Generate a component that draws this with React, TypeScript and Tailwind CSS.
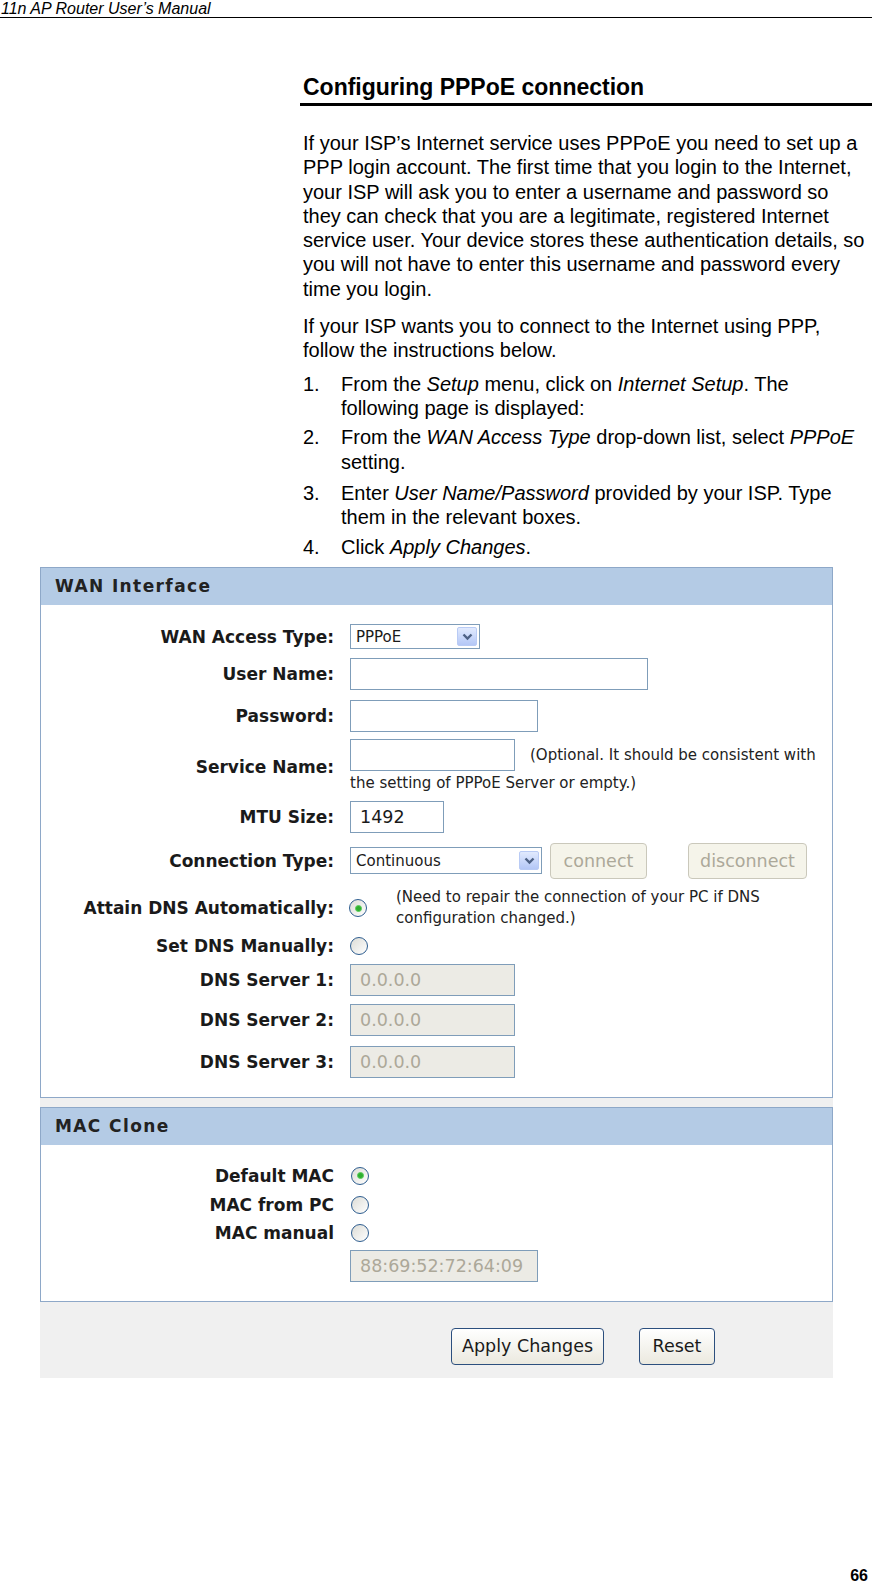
import React from 'react';

const formFont = "font-['DejaVu_Sans',Verdana,sans-serif]";

function Label({ text }: { text: string }) {
  return (
    <div className="w-[293px] shrink-0 text-right font-bold text-[17px] leading-[20px] text-[#1a1a1a]">
      {text}
    </div>
  );
}

function TextBox({ width, value, disabled }: { width: string; value?: string; disabled?: boolean }) {
  return (
    <div
      className={`${width} h-[32px] border border-[#7f9db9] flex items-center pl-[9px] text-[17.5px] ${
        disabled ? 'bg-[#ecebe5] text-[#aca899]' : 'bg-white text-[#1a1a1a]'
      }`}
    >
      {value}
    </div>
  );
}

function Select({ width, height, value }: { width: string; height: string; value: string }) {
  return (
    <div className={`${width} ${height} border border-[#7f9db9] bg-white flex items-center justify-between pl-[5px] pr-[2px] text-[15px] text-[#1a1a1a]`}>
      <span>{value}</span>
      <div className="w-[20px] h-[19px] rounded-[2px] bg-gradient-to-b from-[#e1eafe] to-[#b4c7f6] border border-[#b9cbf5] flex items-center justify-center">
        <svg width="11" height="8" viewBox="0 0 11 8">
          <path d="M1.5 1.5 L5.5 5.5 L9.5 1.5" fill="none" stroke="#4d6185" strokeWidth="2.4" />
        </svg>
      </div>
    </div>
  );
}

function Radio({ checked }: { checked?: boolean }) {
  return (
    <div className="w-[18px] h-[18px] rounded-full border border-[#2e5d8f] bg-gradient-to-br from-[#dcdcd6] to-white flex items-center justify-center">
      {checked && <div className="w-[7px] h-[7px] rounded-full bg-[#2fae2f] border border-[#5ccf5c]" />}
    </div>
  );
}

function XpButton({ width, height, label, disabled }: { width: string; height: string; label: string; disabled?: boolean }) {
  return (
    <div
      className={`${width} ${height} rounded-[4px] border flex items-center justify-center text-[17.5px] ${
        disabled
          ? 'border-[#cac8bb] bg-[#f5f4ea] text-[#aca899]'
          : 'border-[#2c4f7e] bg-gradient-to-b from-white to-[#ebe9df] text-[#1a1a1a]'
      }`}
    >
      {label}
    </div>
  );
}

export default function App() {
  return (
    <div className="w-[872px] h-[1586px] overflow-hidden bg-white text-black font-['Liberation_Sans',Arial,sans-serif]">
      {/* running header */}
      <div className="h-[18px] border-b border-black pl-[1px] text-[16px] italic leading-[17px]">
        11n AP Router User&rsquo;s Manual
      </div>

      {/* section title */}
      <div className="ml-[300px] mt-[55px] border-b-[3px] border-black pl-[3px] pb-[2px]">
        <div className="text-[23px] font-bold leading-[28px]">Configuring PPPoE connection</div>
      </div>

      <div className="ml-[303px] text-[20px] leading-[24.3px] whitespace-nowrap">
        <div className="mt-[25px]">
          <div>If your ISP&rsquo;s Internet service uses PPPoE you need to set up a</div>
          <div>PPP login account. The first time that you login to the Internet,</div>
          <div>your ISP will ask you to enter a username and password so</div>
          <div>they can check that you are a legitimate, registered Internet</div>
          <div>service user. Your device stores these authentication details, so</div>
          <div>you will not have to enter this username and password every</div>
          <div>time you login.</div>
        </div>
        <div className="mt-[13px]">
          <div>If your ISP wants you to connect to the Internet using PPP,</div>
          <div>follow the instructions below.</div>
        </div>
        <div className="mt-[9px] flex">
          <div className="w-[38px]">1.</div>
          <div>
            <div>
              From the <i>Setup</i> menu, click on <i>Internet Setup</i>. The
            </div>
            <div>following page is displayed:</div>
          </div>
        </div>
        <div className="mt-[5px] flex">
          <div className="w-[38px]">2.</div>
          <div>
            <div>
              From the <i>WAN Access Type</i> drop-down list, select <i>PPPoE</i>
            </div>
            <div>setting.</div>
          </div>
        </div>
        <div className="mt-[7px] flex">
          <div className="w-[38px]">3.</div>
          <div>
            <div>
              Enter <i>User Name/Password</i> provided by your ISP. Type
            </div>
            <div>them in the relevant boxes.</div>
          </div>
        </div>
        <div className="mt-[6px] flex">
          <div className="w-[38px]">4.</div>
          <div>
            Click <i>Apply Changes</i>.
          </div>
        </div>
      </div>

      {/* router web page screenshot */}
      <div className={`ml-[40px] mt-[7px] w-[793px] bg-[#f0f0f0] ${formFont}`}>
        <div className="border border-[#8ea8c8] bg-white pb-[19px]">
          <div className="h-[37px] bg-[#b4cbe5] flex items-center pl-[14px] text-[17px] font-bold tracking-[1.4px] text-[#222]">
            WAN Interface
          </div>

          <div className="mt-[16px] h-[32px] flex items-center">
            <Label text="WAN Access Type:" />
            <div className="ml-[16px]">
              <Select width="w-[130px]" height="h-[25px]" value="PPPoE" />
            </div>
          </div>
          <div className="mt-[5px] h-[32px] flex items-center">
            <Label text="User Name:" />
            <div className="ml-[16px]">
              <TextBox width="w-[298px]" />
            </div>
          </div>
          <div className="mt-[10px] h-[32px] flex items-center">
            <Label text="Password:" />
            <div className="ml-[16px]">
              <TextBox width="w-[188px]" />
            </div>
          </div>
          <div className="mt-[7px] flex items-center">
            <Label text="Service Name:" />
            <div className="ml-[16px] text-[15px] text-[#222]">
              <div className="flex items-center">
                <TextBox width="w-[165px]" />
                <span className="ml-[15px]">(Optional. It should be consistent with</span>
              </div>
              <div className="leading-[25px]">the setting of PPPoE Server or empty.)</div>
            </div>
          </div>
          <div className="mt-[5px] h-[32px] flex items-center">
            <Label text="MTU Size:" />
            <div className="ml-[16px]">
              <TextBox width="w-[94px]" value="1492" />
            </div>
          </div>
          <div className="mt-[10px] h-[36px] flex items-center">
            <Label text="Connection Type:" />
            <div className="ml-[16px] flex items-center">
              <Select width="w-[192px]" height="h-[27px]" value="Continuous" />
              <div className="ml-[8px]">
                <XpButton width="w-[97px]" height="h-[36px]" label="connect" disabled />
              </div>
              <div className="ml-[41px]">
                <XpButton width="w-[119px]" height="h-[36px]" label="disconnect" disabled />
              </div>
            </div>
          </div>
          <div className="mt-[8px] h-[43px] flex items-center">
            <Label text="Attain DNS Automatically:" />
            <div className="ml-[15px] flex items-center">
              <Radio checked />
              <div className="ml-[29px] text-[15px] leading-[21px] text-[#222]">
                <div>(Need to repair the connection of your PC if DNS</div>
                <div>configuration changed.)</div>
              </div>
            </div>
          </div>
          <div className="mt-[6px] h-[20px] flex items-center">
            <Label text="Set DNS Manually:" />
            <div className="ml-[16px]">
              <Radio />
            </div>
          </div>
          <div className="mt-[8px] h-[32px] flex items-center">
            <Label text="DNS Server 1:" />
            <div className="ml-[16px]">
              <TextBox width="w-[165px]" value="0.0.0.0" disabled />
            </div>
          </div>
          <div className="mt-[8px] h-[32px] flex items-center">
            <Label text="DNS Server 2:" />
            <div className="ml-[16px]">
              <TextBox width="w-[165px]" value="0.0.0.0" disabled />
            </div>
          </div>
          <div className="mt-[10px] h-[32px] flex items-center">
            <Label text="DNS Server 3:" />
            <div className="ml-[16px]">
              <TextBox width="w-[165px]" value="0.0.0.0" disabled />
            </div>
          </div>
        </div>

        <div className="mt-[9px] border border-[#8ea8c8] bg-white pb-[19px]">
          <div className="h-[37px] bg-[#b4cbe5] flex items-center pl-[14px] text-[17px] font-bold tracking-[1.4px] text-[#222]">
            MAC Clone
          </div>
          <div className="mt-[21px] h-[20px] flex items-center">
            <Label text="Default MAC" />
            <div className="ml-[17px]">
              <Radio checked />
            </div>
          </div>
          <div className="mt-[9px] h-[20px] flex items-center">
            <Label text="MAC from PC" />
            <div className="ml-[17px]">
              <Radio />
            </div>
          </div>
          <div className="mt-[8px] h-[20px] flex items-center">
            <Label text="MAC manual" />
            <div className="ml-[17px]">
              <Radio />
            </div>
          </div>
          <div className="mt-[7px] h-[32px] flex items-center">
            <div className="w-[293px] shrink-0" />
            <div className="ml-[16px]">
              <TextBox width="w-[188px]" value="88:69:52:72:64:09" disabled />
            </div>
          </div>
        </div>

        <div className="pt-[26px] pb-[13px] flex items-center pl-[411px]">
          <XpButton width="w-[153px]" height="h-[37px]" label="Apply Changes" />
          <div className="ml-[35px]">
            <XpButton width="w-[76px]" height="h-[37px]" label="Reset" />
          </div>
        </div>
      </div>

      {/* page number */}
      <div className="mt-[189px] pr-[4px] text-right text-[16px] font-bold leading-[18px]">66</div>
    </div>
  );
}
